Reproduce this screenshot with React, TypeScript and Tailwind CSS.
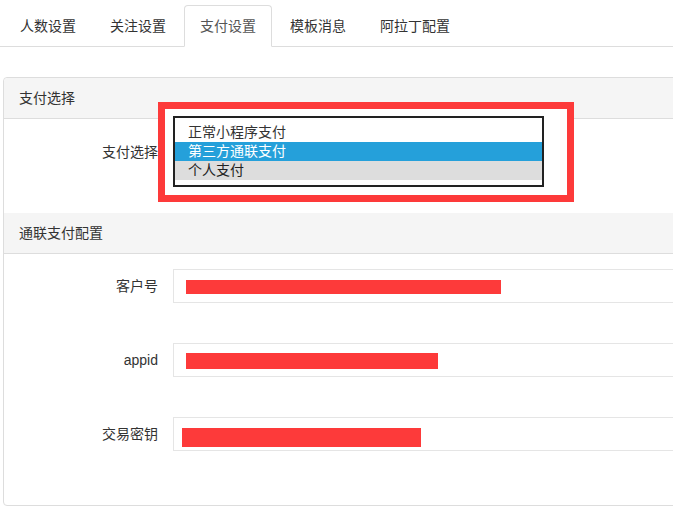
import React from "react";

const tabs = ["人数设置", "关注设置", "支付设置", "模板消息", "阿拉丁配置"];

const fields = [
  { label: "客户号", bar: "ml-[12px] mt-[10px] w-[315px] h-[14px]" },
  { label: "appid", bar: "ml-[12px] mt-[9px] w-[252px] h-[16px]" },
  { label: "交易密钥", bar: "ml-[8px] mt-[10px] w-[239px] h-[19px]" },
];

const options = ["正常小程序支付", "第三方通联支付", "个人支付"];

export default function App() {
  return (
    <div
      className="relative w-full h-[509px] bg-white overflow-hidden text-[14px] leading-5 text-[#333]"
      style={{ fontFamily: '"Liberation Sans", "Noto Sans CJK SC", sans-serif' }}
    >
      {/* Tabs */}
      <ul className="flex pt-[5px] pl-[4px] border-b border-[#ddd]">
        {tabs.map((t) => (
          <li
            key={t}
            className={`mr-[2px] -mb-px px-[15px] py-[10px] border rounded-t ${
              t === "支付设置"
                ? "border-[#ddd] border-b-white bg-white text-[#555]"
                : "border-transparent text-[#333]"
            }`}
          >
            {t}
          </li>
        ))}
      </ul>

      {/* Panel */}
      <div className="mt-[30px] ml-[3px] w-[720px] border border-[#ddd] rounded">
        <div className="h-[41px] px-[15px] flex items-center bg-[#f5f5f5] border-b border-[#ddd] rounded-t">
          支付选择
        </div>
        <div className="h-[94px] pt-[16px]">
          <div className="flex h-[34px] items-center">
            <div className="w-[154px] text-right">支付选择</div>
            <div className="ml-[15px] w-[370px] h-[34px]" />
          </div>
        </div>

        <div className="h-[41px] px-[15px] flex items-center bg-[#f5f5f5] border-b border-[#ddd]">
          通联支付配置
        </div>
        <div className="pt-[15px] pb-[54px] flex flex-col gap-[40px]">
          {fields.map((f) => (
            <div key={f.label} className="flex h-[34px] items-center">
              <div className="w-[154px] text-right">{f.label}</div>
              <div className="ml-[15px] flex-1 h-[34px] border border-[#e5e5e5] bg-white self-start">
                <div className={`bg-[#fd3a3a] ${f.bar}`} />
              </div>
            </div>
          ))}
        </div>
      </div>

      {/* Highlight box over open dropdown */}
      <div className="absolute left-[158px] top-[102px] w-[416px] h-[100px] border-[7px] border-[#fd3a3a] bg-white" />
      <div className="absolute left-[173px] top-[116px] w-[371px] h-[71px] border-2 border-[#222] bg-white pt-[5px]">
        {options.map((o, i) => (
          <div
            key={o}
            className={`h-[19px] pl-[13px] leading-[19px] ${
              i === 1
                ? "bg-[#25a0da] text-white"
                : i === 2
                ? "bg-[#dddddd] text-[#222]"
                : "text-[#333]"
            }`}
          >
            {o}
          </div>
        ))}
      </div>
    </div>
  );
}
